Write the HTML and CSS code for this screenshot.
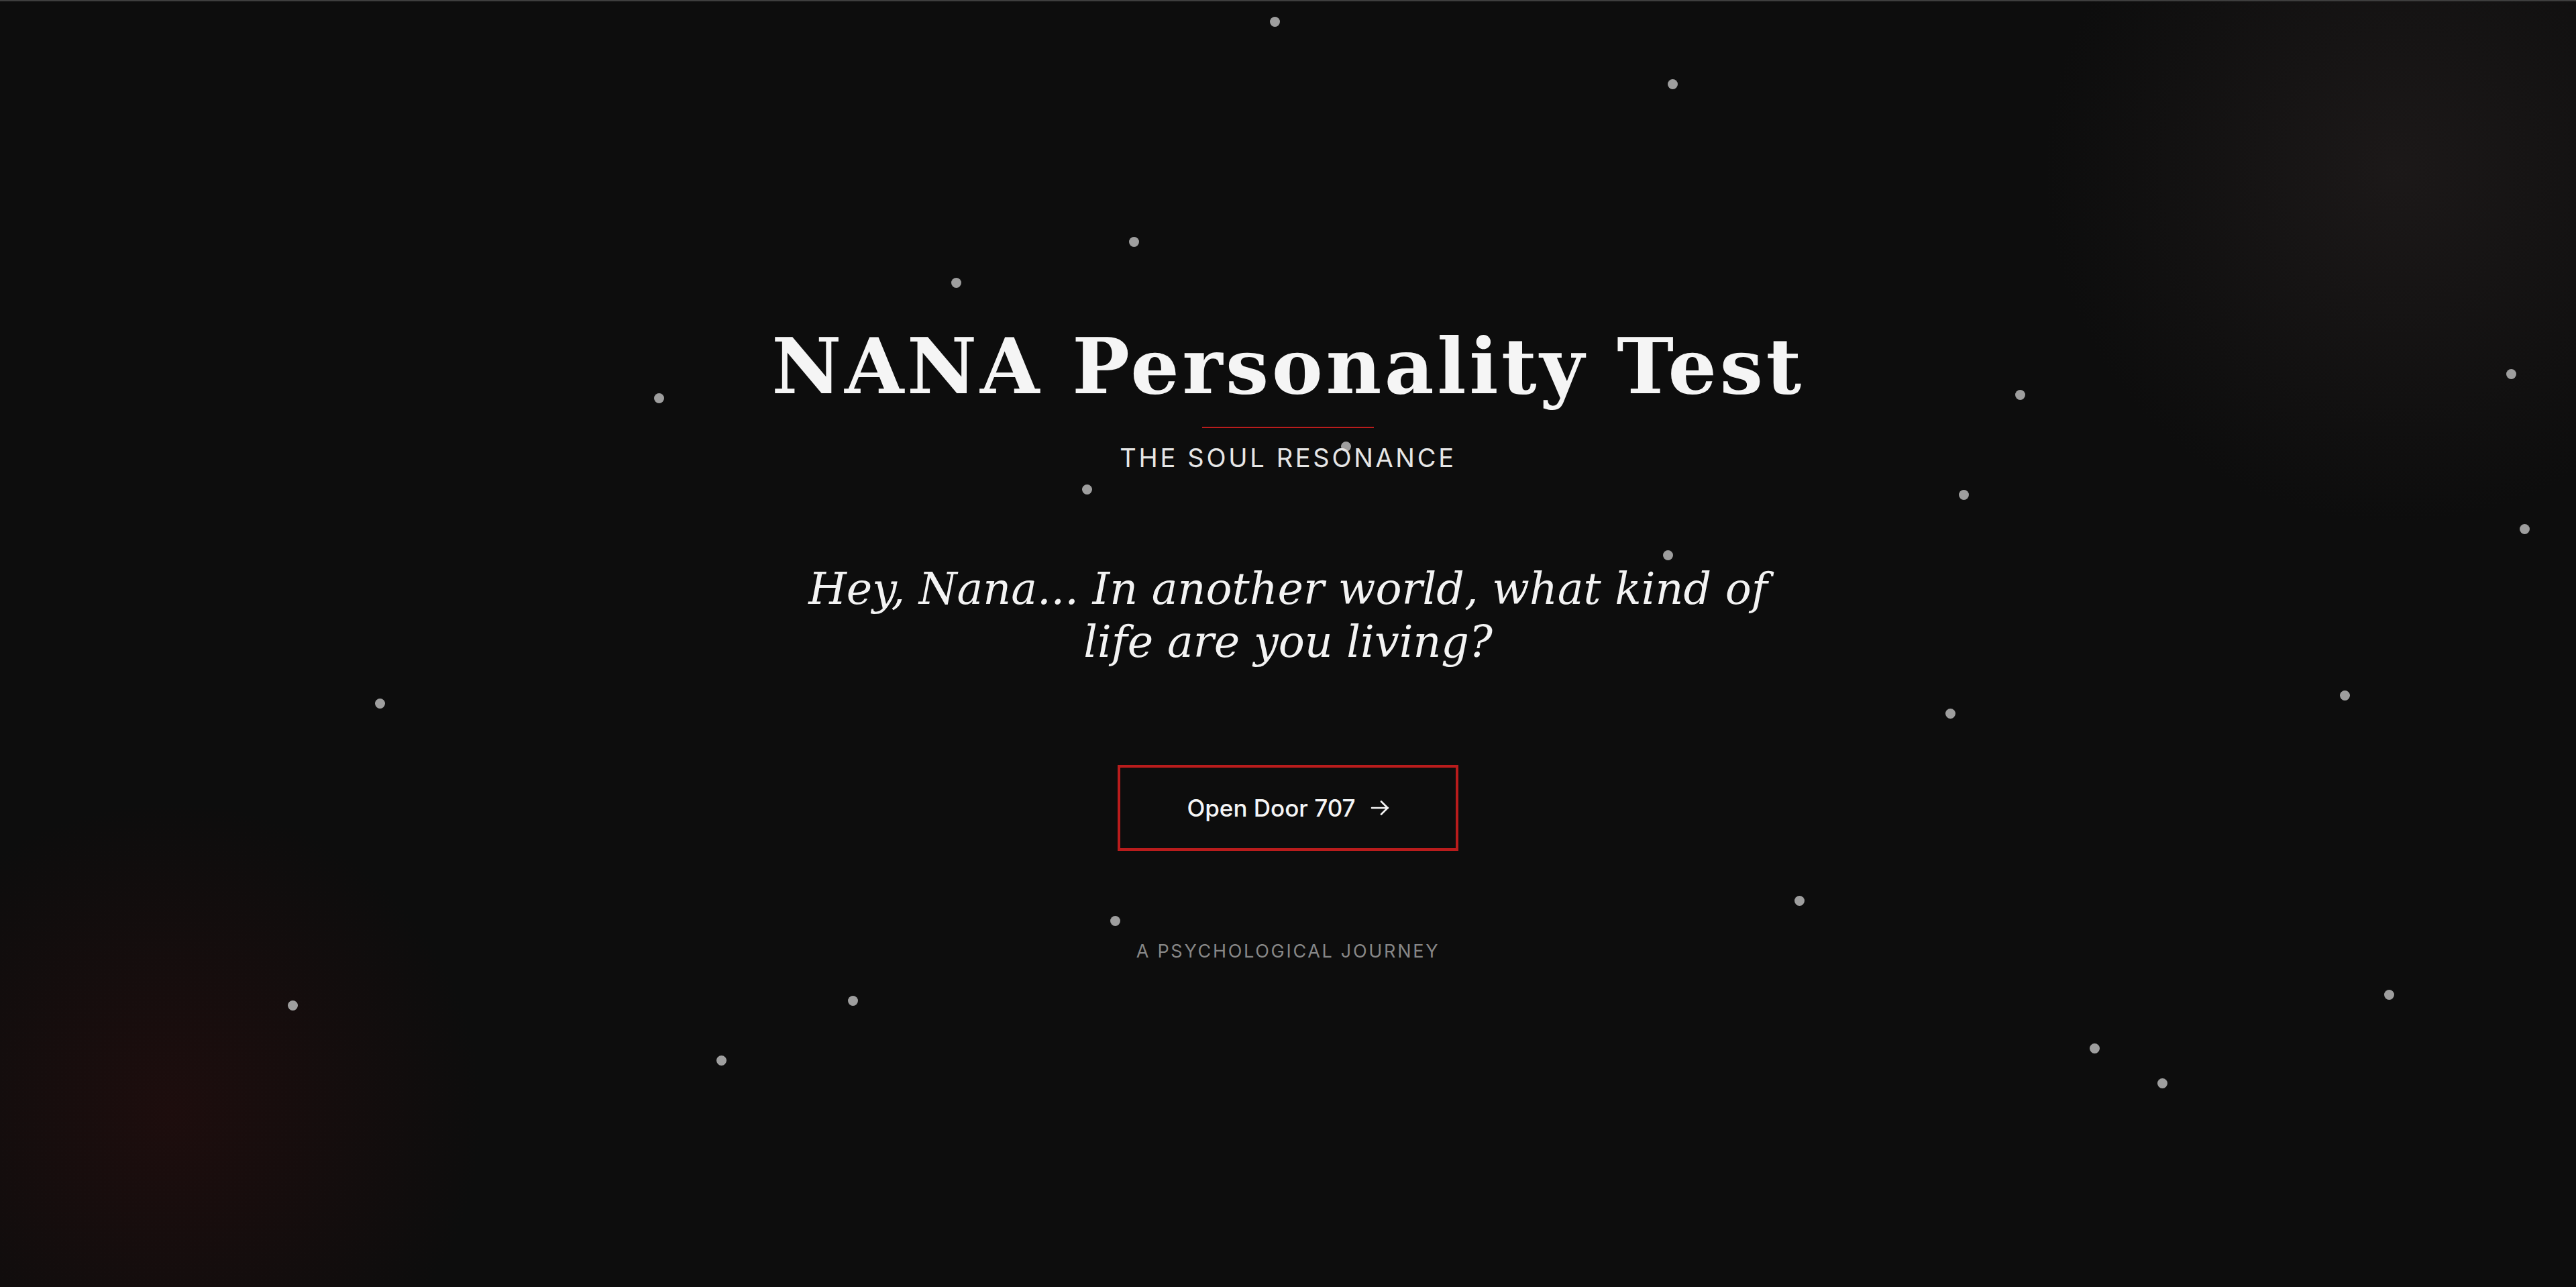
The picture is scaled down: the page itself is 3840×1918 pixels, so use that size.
FILE: index.html
```html
<!DOCTYPE html>
<html lang="en">
<head>
<meta charset="utf-8">
<title>NANA Personality Test</title>
<link rel="stylesheet" href="styles.css">
</head>
<body>
<div class="stars" aria-hidden="true">
  <span class="star" style="--x:1900px;--y:32px"></span>
  <span class="star" style="--x:2493px;--y:125px"></span>
  <span class="star" style="--x:1690px;--y:360px"></span>
  <span class="star" style="--x:1425px;--y:421px"></span>
  <span class="star" style="--x:982px;--y:593px"></span>
  <span class="star" style="--x:3011px;--y:588px"></span>
  <span class="star" style="--x:3743px;--y:557px"></span>
  <span class="star" style="--x:2006px;--y:665px"></span>
  <span class="star" style="--x:1620px;--y:729px"></span>
  <span class="star" style="--x:2927px;--y:737px"></span>
  <span class="star" style="--x:2486px;--y:827px"></span>
  <span class="star" style="--x:3763px;--y:788px"></span>
  <span class="star" style="--x:566px;--y:1048px"></span>
  <span class="star" style="--x:2907px;--y:1063px"></span>
  <span class="star" style="--x:3495px;--y:1036px"></span>
  <span class="star" style="--x:2682px;--y:1342px"></span>
  <span class="star" style="--x:1662px;--y:1372px"></span>
  <span class="star" style="--x:436px;--y:1498px"></span>
  <span class="star" style="--x:1271px;--y:1491px"></span>
  <span class="star" style="--x:3561px;--y:1482px"></span>
  <span class="star" style="--x:1075px;--y:1580px"></span>
  <span class="star" style="--x:3122px;--y:1562px"></span>
  <span class="star" style="--x:3223px;--y:1614px"></span>
</div>
<main class="hero">
  <h1 class="title">NANA Personality Test</h1>
  <div class="rule"></div>
  <p class="subtitle">THE SOUL RESONANCE</p>
  <p class="question">Hey, Nana... In another world, what kind of life are you living?</p>
  <button class="door-btn" type="button">
    <span>Open Door 707</span>
    <svg class="arrow" viewBox="0 0 28 22" width="28" height="22" fill="none" stroke="currentColor" stroke-width="2.6" stroke-linecap="round" stroke-linejoin="round"><path d="M2 11h24"/><path d="M16 1.5l9.5 9.5-9.5 9.5"/></svg>
  </button>
  <p class="journey">A PSYCHOLOGICAL JOURNEY</p>
</main>
</body>
</html>
```
FILE: styles.css
```css
* { box-sizing: border-box; }

html, body {
  margin: 0;
  padding: 0;
  height: 100%;
}

body {
  position: relative;
  min-height: 100vh;
  overflow: hidden;
  border-top: 2px solid #3e3e3e;
  background-color: #0d0d0d;
  background-image:
    radial-gradient(circle 700px at 3573px 255px, rgba(40, 34, 34, 0.55), rgba(13, 13, 13, 0) 75%),
    radial-gradient(circle 620px at 255px 1660px, rgba(60, 14, 14, 0.35), rgba(13, 13, 13, 0) 75%);
  color: #f5f5f5;
  font-family: "Inter", "Noto Sans", sans-serif;
}

.stars {
  position: absolute;
  inset: 0;
  pointer-events: none;
}

.star {
  position: absolute;
  left: calc(var(--x) - 7.5px);
  top: calc(var(--y) - 9.5px);
  width: 15px;
  height: 15px;
  border-radius: 50%;
  background: #9e9e9e;
}

.hero {
  position: relative;
  min-height: calc(100vh - 2px);
  display: flex;
  flex-direction: column;
  align-items: center;
  justify-content: center;
  padding-bottom: 8px;
  text-align: center;
}

.title {
  margin: 0;
  font-family: "DejaVu Serif", serif;
  font-weight: 700;
  font-size: 114px;
  line-height: 1.2;
  letter-spacing: 0.04em;
  color: #f5f5f5;
}

.rule {
  width: 256px;
  height: 2px;
  margin-top: 21px;
  background: #b91c1c;
}

.subtitle {
  margin: 22px 0 0;
  font-size: 38px;
  line-height: 1.2;
  font-weight: 400;
  letter-spacing: 0.097em;
  color: #e6e6e6;
}

.question {
  max-width: 1480px;
  margin: 132px 0 0;
  font-family: "DejaVu Serif", serif;
  font-style: italic;
  font-size: 65px;
  line-height: 79px;
  color: #f3f3f3;
}

.door-btn {
  display: flex;
  align-items: center;
  justify-content: center;
  gap: 22px;
  width: 508px;
  height: 128px;
  margin-top: 144px;
  padding: 0;
  border: 4px solid #b91c1c;
  background: transparent;
  color: #f5f5f5;
  font-family: "Inter", sans-serif;
  font-size: 35px;
  font-weight: 500;
  cursor: pointer;
}

.arrow {
  display: block;
  flex: none;
}

.journey {
  margin: 134px 0 0;
  font-size: 27px;
  line-height: 1.2;
  letter-spacing: 0.1em;
  color: #878787;
}
```
